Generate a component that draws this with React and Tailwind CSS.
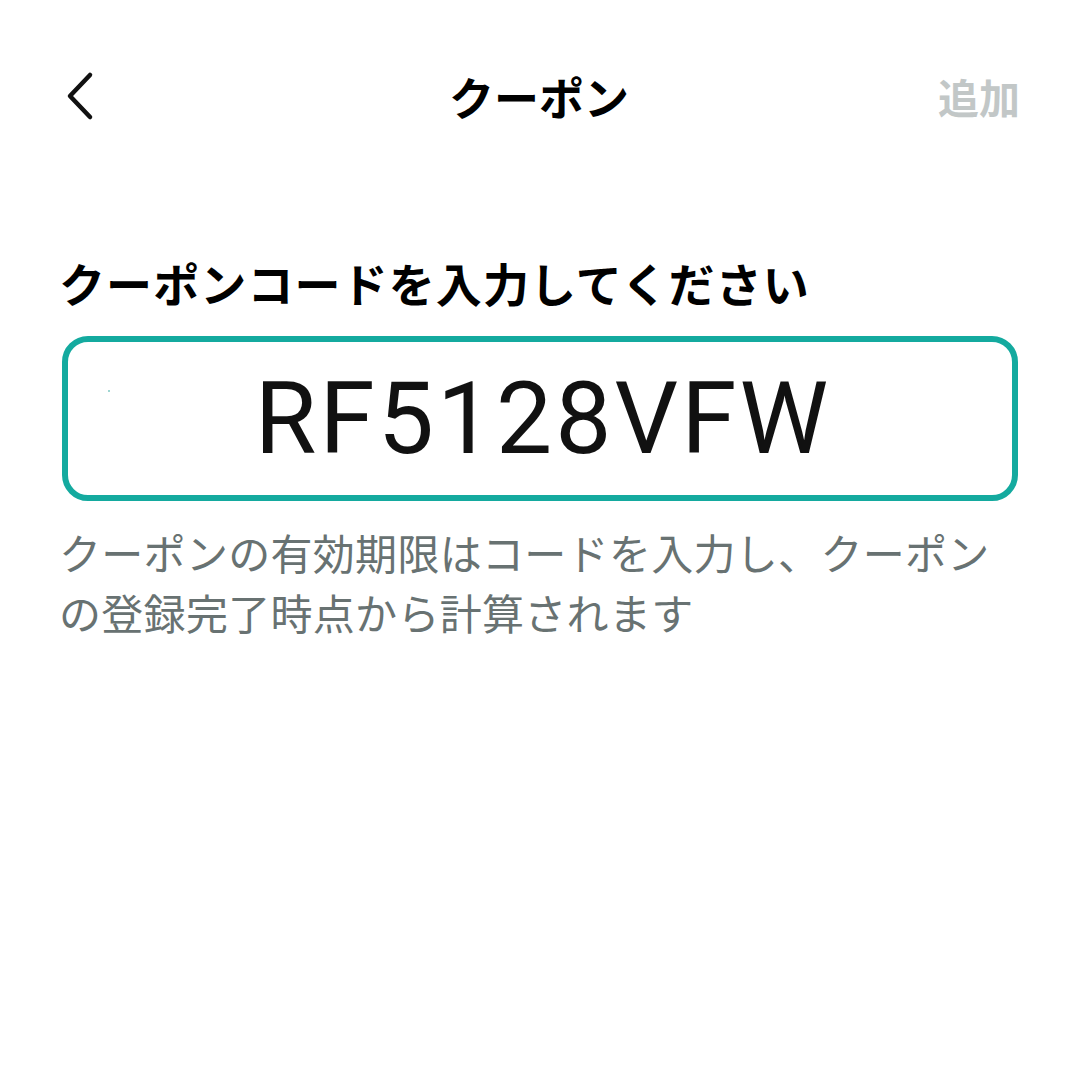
import React from "react";

export default function App() {
  const jp = { fontFamily: '"Noto Sans CJK JP", "Noto Sans", sans-serif' };
  return (
    <div className="w-[1080px] h-[1079px] bg-white overflow-hidden" style={jp}>
      <header className="relative flex items-center justify-between px-[62px] pt-[32px] h-[160px]">
        <button className="w-[40px] h-[50px] flex items-center justify-start">
          <svg width="34" height="50" viewBox="0 0 34 50" fill="none">
            <path d="M28 4 L8 25 L28 46" stroke="#111" strokeWidth="4.5" strokeLinecap="round" strokeLinejoin="round" />
          </svg>
        </button>
        <h1 className="absolute left-0 right-0 top-[32px] h-[128px] flex items-center justify-center text-[45px] font-bold text-black leading-none pointer-events-none pr-[2px]">
          クーポン
        </h1>
        <span className="text-[41px] font-bold text-[#c2c7c7] leading-none -mr-[2px]">追加</span>
      </header>
      <main className="px-[62px] pt-[92px]">
        <h2 className="-ml-[3px] text-[46px] font-bold text-black leading-[60px] tracking-[1.1px]">
          クーポンコードを入力してください
        </h2>
        <div className="relative mt-[24px] h-[165px] border-[6px] border-[#14aa9f] rounded-[26px] flex items-center justify-center">
          <span className="absolute left-[40px] top-[48px] w-[2px] h-[2px] bg-[#9fd6d2]" />
          <span className="text-[100px] text-[#111] leading-none tracking-[3px] pl-[6px]" style={{ fontFamily: 'Roboto, "Noto Sans", sans-serif' }}>
            RF5128VFW
          </span>
        </div>
        <p className="-ml-[3px] mt-[21px] text-[42px] text-[#687272] leading-[60px] tracking-[0.3px]">
          クーポンの有効期限はコードを入力し、クーポンの登録完了時点から計算されます
        </p>
      </main>
    </div>
  );
}
